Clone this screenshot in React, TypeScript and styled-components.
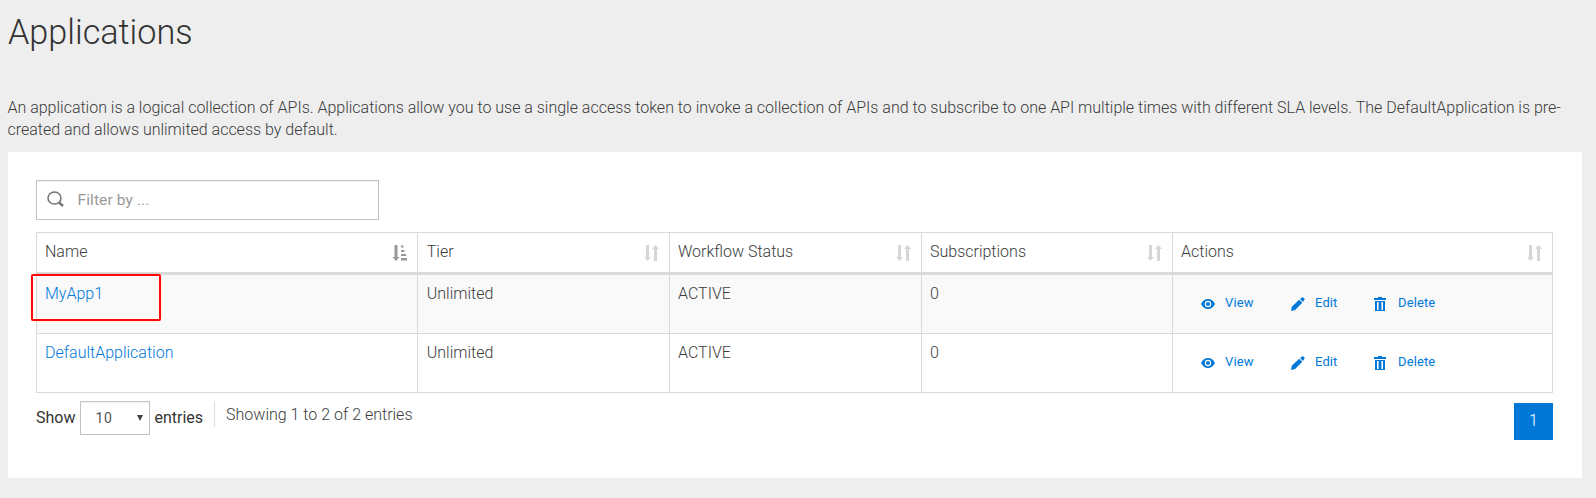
import React from "react";
import styled, { createGlobalStyle, css } from "styled-components";

const GlobalStyle = createGlobalStyle`
  *, *::before, *::after { box-sizing: border-box; }
  body {
    margin: 0;
    min-height: 100vh;
    background: #eeeeee;
    color: #3c3c3c;
    font-family: Roboto, "Liberation Sans", sans-serif;
    font-weight: 300;
    font-size: 16px;
    line-height: 22px;
  }
`;

const Page = styled.main`
  padding: 0 14px 0 8px;
`;

const Title = styled.h1`
  margin: 0;
  padding-top: 12px;
  font-size: 34.2px;
  font-weight: 300;
  line-height: 40px;
  color: #333;
`;

const Intro = styled.p`
  margin: 45px 0 11px -0.5px;
  font-size: 16px;
  letter-spacing: -0.008px;
`;

const Panel = styled.section`
  height: 326px;
  padding: 28px 29px 0 28px;
  background: #fff;
`;

const SearchBox = styled.label`
  display: flex;
  align-items: center;
  width: 343px;
  height: 40px;
  padding: 0 0 0 10px;
  gap: 13.5px;
  border: 1px solid #c2c2c2;
  box-shadow: inset 0 1px 1px rgba(0, 0, 0, 0.05);
  color: #777;
`;

const SearchIcon = styled.svg`
  width: 17px;
  height: 17px;
  margin-top: -2px;
  fill: none;
  stroke: currentColor;
`;

const SearchInput = styled.input`
  flex: 1;
  min-width: 0;
  border: 0;
  outline: 0;
  padding: 0;
  background: transparent;
  font: 400 15.5px/20px Roboto, sans-serif;
  letter-spacing: 0.1px;
  &::placeholder { color: #999; opacity: 1; }
`;

const Grid = styled.div`
  margin-top: 12px;
  border: 1px solid #dadada;
  border-width: 1px 0 0 1px;
`;

const Row = styled.div<{ $striped?: boolean }>`
  display: grid;
  grid-template-columns: 381px 252px 252px 251px 380px;
  background: ${(p) => (p.$striped ? "#f9f9f9" : "#fff")};
`;

const cell = css`
  border: 0 solid #dadada;
  border-right-width: 1px;
  padding: 0 8px;
  &:nth-child(2) { padding-left: 8.75px; }
`;

const HeadCell = styled.div`
  ${cell}
  display: flex;
  justify-content: space-between;
  height: 42px;
  padding-top: 8px;
  padding-right: 10px;
  border-bottom-width: 3px;
`;

const Cell = styled.div`
  ${cell}
  height: 59px;
  padding-top: 8px;
  border-bottom-width: 1px;
`;

const AppLink = styled.a<{ $marked?: boolean }>`
  position: relative;
  color: #0078d7;
  text-decoration: none;
  ${(p) =>
    p.$marked &&
    css`
      &::after {
        content: "";
        position: absolute;
        left: -14px;
        top: -10px;
        width: 130px;
        height: 47px;
        border: 2px solid #ff0808;
        border-radius: 2px;
        box-shadow: 0 0 1px rgba(255, 0, 0, 0.6);
      }
    `}
`;

const SortIcon = styled.svg<{ $active?: boolean }>`
  width: 15px;
  height: 16px;
  margin-top: 4px;
  fill: ${(p) => (p.$active ? "#999" : "#d6d6d6")};
`;

const Actions = styled.div`
  display: flex;
  padding: 11px 0 0 20px;
`;

const Action = styled.a<{ $width: number }>`
  display: flex;
  width: ${(p) => p.$width}px;
  color: #0078d7;
  font-size: 13px;
  font-weight: 400;
  letter-spacing: 0.12px;
  line-height: 18px;
  text-decoration: none;
`;

const ActionIcon = styled.svg`
  width: 14px;
  height: 14px;
  margin: 3px 10px 0 0;
  fill: currentColor;
`;

const Footer = styled.footer`
  display: flex;
  align-items: flex-start;
  padding-top: 8px;
`;

const Length = styled.label`
  display: flex;
  align-items: center;
  gap: 4px;
  font-weight: 400;
  color: #333;
`;

const Select = styled.span`
  display: flex;
  align-items: center;
  justify-content: space-between;
  width: 70px;
  height: 34px;
  margin-left: 1px;
  padding: 0 6px 0 14px;
  border: 1px solid #c2c2c2;
  box-shadow: inset 0 1px 1px rgba(0, 0, 0, 0.05);
  font-size: 14px;
  letter-spacing: 0.6px;
  color: #555;
`;

const Caret = styled.i`
  border: solid transparent;
  border-width: 6px 3px 0;
  border-top-color: #444;
`;

const Info = styled.div`
  height: 26px;
  margin-left: 11px;
  padding-left: 11px;
  border-left: 1px solid #ddd;
  line-height: 27px;
`;

const PageButton = styled.button`
  width: 39px;
  height: 37px;
  margin: 2px 0 0 auto;
  padding: 0 0 2px;
  border: 0;
  background: #0078d7;
  color: #fff;
  font: 300 16px/22px Roboto, sans-serif;
`;

const columns = ["Name", "Tier", "Workflow Status", "Subscriptions", "Actions"];
const apps = [
  { name: "MyApp1", tier: "Unlimited", status: "ACTIVE", subscriptions: 0 },
  { name: "DefaultApplication", tier: "Unlimited", status: "ACTIVE", subscriptions: 0 },
];

function Sort({ active }: { active?: boolean }) {
  return active ? (
    <SortIcon viewBox="0 0 15 16" $active>
      <path d="M2.500 0h3v12h2L4 16 .5 12h2z" />
      <path d="M9 0.500h2.500v2H9zM9 5h3.500v2H9zM9 9h5v2H9zM9 13h6v2.500H9z" />
    </SortIcon>
  ) : (
    <SortIcon viewBox="0 0 15 16">
      <path d="M2 0h3v12h2l-3.500 4L0 12h2z" />
      <path d="M10 16h3V4h2l-3.500-4L8 4h2z" />
    </SortIcon>
  );
}

export default function App() {
  return (
    <Page>
      <GlobalStyle />
      <Title>Applications</Title>
      <Intro>
        An application is a logical collection of APIs. Applications allow you to use a single access token to invoke a
        collection of APIs and to subscribe to one API multiple times with different SLA levels. The DefaultApplication
        is pre-created and allows unlimited access by default.
      </Intro>
      <Panel>
        <SearchBox>
          <SearchIcon viewBox="0 0 17 17">
            <ellipse cx="7.500" cy="7" rx="6.500" ry="6" strokeWidth="1.600" />
            <path d="M12 11.500l4 3.500" strokeWidth="2.400" />
          </SearchIcon>
          <SearchInput placeholder="Filter by ..." />
        </SearchBox>
        <Grid>
          <Row>
            {columns.map((c, i) => (
              <HeadCell key={c}>
                {c}
                <Sort active={i === 0} />
              </HeadCell>
            ))}
          </Row>
          {apps.map((a, i) => (
            <Row key={a.name} $striped={i % 2 === 0}>
              <Cell>
                <AppLink $marked={i === 0}>{a.name}</AppLink>
              </Cell>
              <Cell>{a.tier}</Cell>
              <Cell>{a.status}</Cell>
              <Cell>{a.subscriptions}</Cell>
              <Cell>
                <Actions>
                  <Action $width={90}>
                    <ActionIcon viewBox="0 0 14 14">
                      <path fillRule="evenodd" d="M0 7Q2.500 2 7 2T14 7Q11.500 12 7 12T0 7zM7 3.800a3.200 3.200 0 1 0 0 6.400a3.200 3.200 0 0 0 0-6.400zM7 4.900a2.100 2.100 0 1 1 0 4.200a2.100 2.100 0 0 1 0-4.200z" />
                    </ActionIcon>
                    View
                  </Action>
                  <Action $width={83}>
                    <ActionIcon viewBox="0 0 14 14">
                      <path d="M0 14l.8-4.200 7.400-7 3.100 3-7.200 7.200zM9 2.100L11 .4q.6-.5 1.200 0l1.200 1.200q.5.600 0 1.200l-1.400 2.100z" />
                    </ActionIcon>
                    Edit
                  </Action>
                  <Action $width={80}>
                    <ActionIcon viewBox="0 0 14 14">
                      <path fillRule="evenodd" d="M4 0h4v1h4v2H0V1h4zM1 4h10v10H1zM3 5v8h1.600V5zM7.400 5v8H9V5z" />
                    </ActionIcon>
                    Delete
                  </Action>
                </Actions>
              </Cell>
            </Row>
          ))}
        </Grid>
        <Footer>
          <Length>
            Show
            <Select>
              10
              <Caret />
            </Select>
            entries
          </Length>
          <Info>Showing 1 to 2 of 2 entries</Info>
          <PageButton>1</PageButton>
        </Footer>
      </Panel>
    </Page>
  );
}
